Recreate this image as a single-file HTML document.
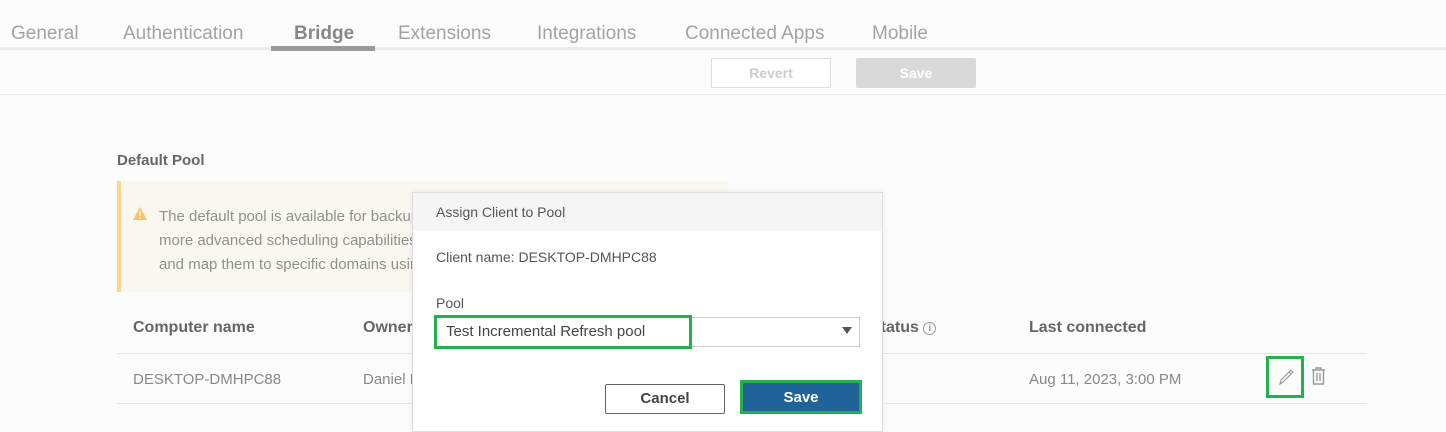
<!DOCTYPE html>
<html><head><meta charset="utf-8"><style>
*{margin:0;padding:0;box-sizing:border-box}
body{width:1446px;height:425px;overflow:hidden;background:#fcfcfc;font-family:"Liberation Sans",sans-serif;position:relative;color:#666}
.a{position:absolute;white-space:nowrap}
.tab{top:23px;font-size:19px;color:#a3a3a3}
</style></head><body>
<div class="a" style="left:0;top:47px;width:1446px;height:3px;background:#ebebeb"></div>
<div class="a tab" style="left:11px">General</div>
<div class="a tab" style="left:123px">Authentication</div>
<div class="a tab" style="left:294px;color:#888;font-weight:bold">Bridge</div>
<div class="a" style="left:271px;top:46px;width:104px;height:5px;background:#999"></div>
<div class="a tab" style="left:398px">Extensions</div>
<div class="a tab" style="left:537px">Integrations</div>
<div class="a tab" style="left:685px">Connected Apps</div>
<div class="a tab" style="left:872px">Mobile</div>
<div class="a" style="left:711px;top:58px;width:120px;height:30px;border:1px solid #ddd;background:#fff;color:#ccc;font-size:14px;font-weight:bold;text-align:center;line-height:28px">Revert</div>
<div class="a" style="left:856px;top:58px;width:120px;height:30px;background:#d9d9d9;color:#fff;font-size:14px;font-weight:bold;text-align:center;line-height:30px;border-radius:2px">Save</div>
<div class="a" style="left:0;top:94px;width:1446px;height:1px;background:#ebebeb"></div>
<div class="a" style="left:117px;top:152px;font-size:15px;font-weight:bold;color:#666">Default Pool</div>
<div class="a" style="left:117px;top:181px;width:611px;height:111px;background:#faf7f0;border-left:4px solid #fcd68a"></div>
<svg class="a" style="left:133px;top:207px" width="14" height="13" viewBox="0 0 14 13"><path d="M7 0L14 13H0Z" fill="#f7c66b"/><rect x="6.3" y="4" width="1.4" height="5" fill="#fff"/><rect x="6.3" y="10" width="1.4" height="1.4" fill="#fff"/></svg>
<div class="a" style="left:159px;top:205px;font-size:15px;line-height:24px;color:#909090">The default pool is available for backup<br>more advanced scheduling capabilities<br>and map them to specific domains using</div>
<div class="a" style="left:133px;top:319px;font-size:16px;font-weight:bold;color:#666">Computer name</div>
<div class="a" style="left:363px;top:319px;font-size:16px;font-weight:bold;color:#666">Owner</div>
<div class="a" style="left:870px;top:319px;font-size:16px;font-weight:bold;color:#666">Status <span style="display:inline-block;width:13px;height:13px;border:1px solid #999;border-radius:50%;font-size:10px;line-height:11px;text-align:center;font-weight:normal;vertical-align:1px">i</span></div>
<div class="a" style="left:1029px;top:319px;font-size:16px;font-weight:bold;color:#666">Last connected</div>
<div class="a" style="left:117px;top:353px;width:1250px;height:1px;background:#e6e6e6"></div>
<div class="a" style="left:117px;top:403px;width:1250px;height:1px;background:#e6e6e6"></div>
<div class="a" style="left:133px;top:371px;font-size:15px;color:#888">DESKTOP-DMHPC88</div>
<div class="a" style="left:363px;top:371px;font-size:15px;color:#888">Daniel Doe</div>
<div class="a" style="left:1029px;top:371px;font-size:15px;color:#888">Aug 11, 2023, 3:00 PM</div>
<div class="a" style="left:1266px;top:356px;width:38px;height:42px;border:3px solid #22b14c"></div>
<svg class="a" style="left:1277px;top:367px" width="18" height="20" viewBox="0 0 18 20"><path d="M3 17L4 13L14 3L16 5L6 15Z M12 5L14 7" fill="none" stroke="#999" stroke-width="1.2"/></svg>
<svg class="a" style="left:1311px;top:367px" width="15" height="18" viewBox="0 0 15 18"><path d="M1 3H14M5 3V1H10V3M2.5 3V17H12.5V3M6 6V14M9 6V14" fill="none" stroke="#999" stroke-width="1.4"/></svg>
<div class="a" style="left:412px;top:192px;width:471px;height:240px;background:#fff;border:1px solid #ddd;box-shadow:0 0 6px rgba(0,0,0,.08)"></div>
<div class="a" style="left:413px;top:193px;width:469px;height:38px;background:#f5f5f5"></div>
<div class="a" style="left:436px;top:204px;font-size:14px;color:#555">Assign Client to Pool</div>
<div class="a" style="left:436px;top:249px;font-size:14px;color:#555">Client name: DESKTOP-DMHPC88</div>
<div class="a" style="left:436px;top:295px;font-size:14px;color:#555">Pool</div>
<div class="a" style="left:435px;top:317px;width:425px;height:30px;border:1px solid #ccc;background:#fff"></div>
<div class="a" style="left:842px;top:327px;width:0;height:0;border-left:5px solid transparent;border-right:5px solid transparent;border-top:7px solid #555"></div>
<div class="a" style="left:434px;top:315px;width:258px;height:34px;border:3px solid #22b14c"></div>
<div class="a" style="left:446px;top:323px;font-size:15px;color:#444">Test Incremental Refresh pool</div>
<div class="a" style="left:605px;top:384px;width:120px;height:30px;border:1px solid #666;border-radius:2px;background:#fff;font-size:15px;font-weight:bold;color:#444;text-align:center;line-height:28px">Cancel</div>
<div class="a" style="left:740px;top:380px;width:122px;height:34px;border:3px solid #22b14c;background:#1f6399;font-size:15px;font-weight:bold;color:#fff;text-align:center;line-height:30px">Save</div>
</body></html>
